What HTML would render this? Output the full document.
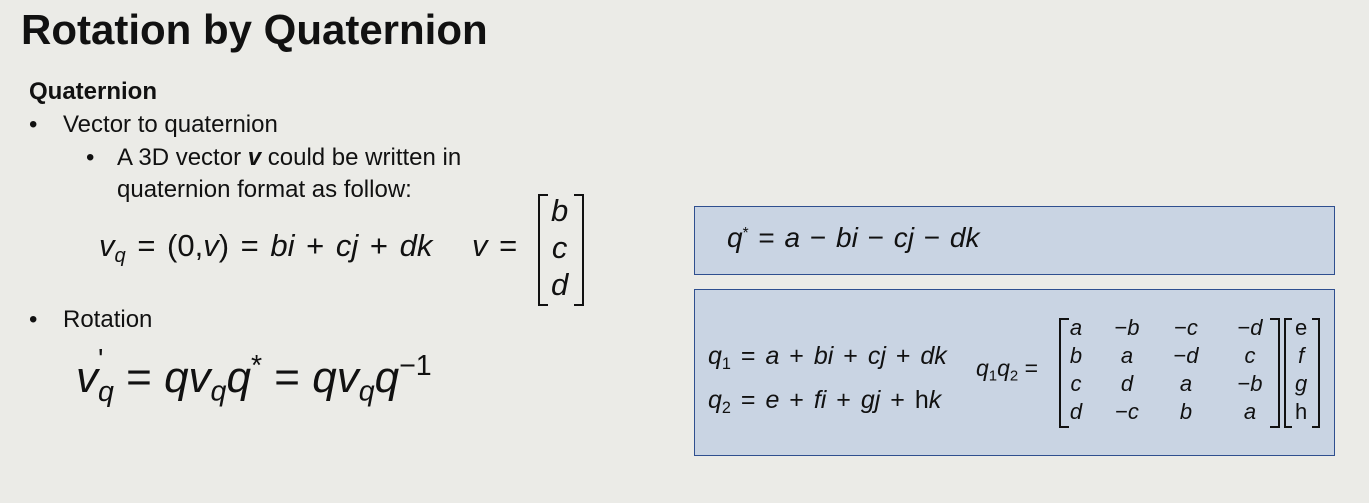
<!DOCTYPE html>
<html><head><style>
body{margin:0;width:1369px;height:503px;background:#ebebe7;position:relative;overflow:hidden;font-family:"Liberation Sans",sans-serif;color:#111}
.a{position:absolute;white-space:nowrap}
i{font-style:italic}
.box{position:absolute;background:#c9d4e3;border:1.5px solid #2f4f8f;box-sizing:border-box}
.m{font-family:"Liberation Sans",sans-serif}
.br{position:absolute;border:2px solid #111;}
.brl{border-right:none;width:8px}
.brr{border-left:none;width:8px}
sub{font-size:65%;vertical-align:-0.3em}
sup{font-size:65%;vertical-align:0.6em}
.c{position:absolute;font-size:22px;line-height:28px;text-align:center;width:40px}
</style></head><body>
<div class="a" style="left:21px;top:6px;font-size:42px;font-weight:bold">Rotation by Quaternion</div>
<div class="a" style="left:29px;top:78px;font-size:24px;font-weight:bold">Quaternion</div>
<div class="a" style="left:29px;top:111px;font-size:24px">•</div>
<div class="a" style="left:63px;top:111px;font-size:24px">Vector to quaternion</div>
<div class="a" style="left:86px;top:144px;font-size:24px">•</div>
<div class="a" style="left:117px;top:144px;font-size:24px">A 3D vector <b><i>v</i></b> could be written in</div>
<div class="a" style="left:117px;top:176px;font-size:24px">quaternion format as follow:</div>
<div class="a m" style="left:99px;top:228px;font-size:31px;word-spacing:3px"><i>v</i><sub><i>q</i></sub> = (0,<i>v</i>) = <i>bi</i> + <i>cj</i> + <i>dk</i></div>
<div class="a m" style="left:472px;top:228px;font-size:31px;word-spacing:3px"><i>v</i> =</div>
<div class="br brl" style="left:538px;top:194px;height:108px"></div>
<div class="br brr" style="left:574px;top:194px;height:108px"></div>
<div class="a m" style="left:551px;top:192px;font-size:31px;line-height:37px;text-align:center"><i>b</i><br><i>c</i><br><i>d</i></div>
<div class="a" style="left:29px;top:306px;font-size:24px">•</div>
<div class="a" style="left:63px;top:306px;font-size:24px">Rotation</div>
<div class="a m" style="left:76px;top:350px;font-size:44px"><i>v</i><sub style="position:relative"><i>q</i><span style="position:absolute;left:0;top:-1.1em">'</span></sub> = <i>qv</i><sub><i>q</i></sub><i>q</i><sup>*</sup> = <i>qv</i><sub><i>q</i></sub><i>q</i><sup>−1</sup></div>

<div class="box" style="left:694px;top:206px;width:641px;height:69px"></div>
<div class="a m" style="left:727px;top:222px;font-size:28px;word-spacing:2px"><i>q</i><sup style="font-size:55%">*</sup> = <i>a</i> − <i>bi</i> − <i>cj</i> − <i>dk</i></div>

<div class="box" style="left:694px;top:289px;width:641px;height:167px"></div>
<div class="a m" style="left:708px;top:338px;font-size:25px;line-height:36px;word-spacing:3px"><i>q</i><sub>1</sub> = <i>a</i> + <i>bi</i> + <i>cj</i> + <i>dk</i><br><i>q</i><sub>2</sub> = <i>e</i> + <i>fi</i> + <i>gj</i> + h<i>k</i></div>
<div class="a m" style="left:976px;top:355px;font-size:23px"><i>q</i><sub>1</sub><i>q</i><sub>2</sub> =</div>
<div class="br brl" style="left:1059px;top:318px;height:106px"></div>
<div class="br brr" style="left:1270px;top:318px;height:106px"></div>
<div class="c" style="left:1056px;top:314px"><i>a</i><br><i>b</i><br><i>c</i><br><i>d</i></div>
<div class="c" style="left:1107px;top:314px">−<i>b</i><br><i>a</i><br><i>d</i><br>−<i>c</i></div>
<div class="c" style="left:1166px;top:314px">−<i>c</i><br>−<i>d</i><br><i>a</i><br><i>b</i></div>
<div class="c" style="left:1230px;top:314px">−<i>d</i><br><i>c</i><br>−<i>b</i><br><i>a</i></div>
<div class="br brl" style="left:1284px;top:318px;height:106px;width:6px"></div>
<div class="br brr" style="left:1312px;top:318px;height:106px;width:6px"></div>
<div class="a m" style="left:1295px;top:314px;font-size:22px;line-height:28px;text-align:center">e<br><i>f</i><br><i>g</i><br>h</div>
</body></html>
